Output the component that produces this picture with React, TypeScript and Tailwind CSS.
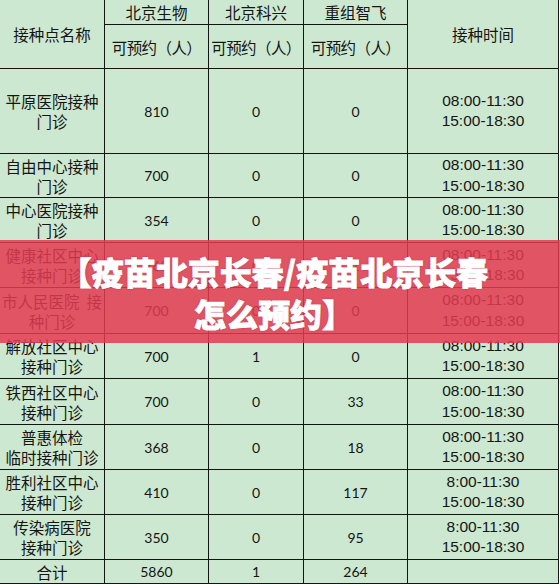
const cjk = '[font-family:"Noto_Sans_CJK_SC",sans-serif]';

type Row = {
  name: [string, string];
  a: string;
  b: string;
  c: string;
  time: [string, string] | null;
  h: string;
};

const rows: Row[] = [
  { name: ['平原医院接种', '门诊'], a: '810', b: '0', c: '0', time: ['08:00-11:30', '15:00-18:30'], h: 'h-[85px]' },
  { name: ['自由中心接种', '门诊'], a: '700', b: '0', c: '0', time: ['08:00-11:30', '15:00-18:30'], h: 'h-[44px]' },
  { name: ['中心医院接种', '门诊'], a: '354', b: '0', c: '0', time: ['08:00-11:30', '15:00-18:30'], h: 'h-[45px]' },
  { name: ['健康社区中心', '接种门诊'], a: '768', b: '0', c: '1', time: ['08:00-11:30', '15:00-18:30'], h: 'h-[45px]' },
  { name: ['市人民医院  接', '种门诊'], a: '700', b: '0', c: '0', time: ['08:00-11:30', '15:00-18:30'], h: 'h-[46px]' },
  { name: ['解放社区中心', '接种门诊'], a: '700', b: '1', c: '0', time: ['08:00-11:30', '15:00-18:30'], h: 'h-[45px]' },
  { name: ['铁西社区中心', '接种门诊'], a: '700', b: '0', c: '33', time: ['08:00-11:30', '15:00-18:30'], h: 'h-[46px]' },
  { name: ['普惠体检', '临时接种门诊'], a: '368', b: '0', c: '18', time: ['08:00-11:30', '15:00-18:30'], h: 'h-[45px]' },
  { name: ['胜利社区中心', '接种门诊'], a: '410', b: '0', c: '117', time: ['8:00-11:30', '15:00-18:30'], h: 'h-[45px]' },
  { name: ['传染病医院', '接种门诊'], a: '350', b: '0', c: '95', time: ['8:00-11:30', '15:00-18:30'], h: 'h-[45px]' },
];

const cell = 'border border-[#141414] p-0 text-center align-middle';
const num = 'text-[14px] [font-family:Lato,sans-serif]';
const time = 'text-[15.5px] leading-[20.5px] [font-family:"Liberation_Sans",Arial,sans-serif]';
const label = `text-[15.5px] leading-[20px] ${cjk}`;
const banner = `text-[32px] font-black leading-[42px] text-white [-webkit-text-stroke:0.8px_white] [text-shadow:0_0_2px_rgba(90,0,20,0.5)] ${cjk}`;

export default function App() {
  return (
    <div className="relative h-[585px] w-[560px] overflow-hidden bg-white text-[#151515]">
      <table className="table-fixed border-collapse bg-[#cde8d0] -mt-px -ml-px w-[559px]">
        <colgroup>
          <col className="w-[105px]" />
          <col className="w-[104px]" />
          <col className="w-[95px]" />
          <col className="w-[104px]" />
          <col className="w-[151px]" />
        </colgroup>
        <tbody>
          <tr className="h-[25px]">
            <td rowSpan={2} className={`${cell} ${label}`}>接种点名称</td>
            <td className={`${cell} ${label}`}>北京生物</td>
            <td className={`${cell} ${label}`}>北京科兴</td>
            <td className={`${cell} ${label}`}>重组智飞</td>
            <td rowSpan={2} className={`${cell} ${label}`}>接种时间</td>
          </tr>
          <tr className="h-[44px]">
            <td className={`${cell} ${label} whitespace-nowrap tracking-[-0.6px]`}>可预约（人）</td>
            <td className={`${cell} ${label} whitespace-nowrap tracking-[-0.6px]`}>可预约（人）</td>
            <td className={`${cell} ${label} whitespace-nowrap tracking-[-0.6px]`}>可预约（人）</td>
          </tr>
          {rows.map((r) => (
            <tr key={r.name.join('')} className={r.h}>
              <td className={`${cell} ${label} overflow-hidden`}>
                <div className="whitespace-pre">{r.name[0]}</div>
                <div className="whitespace-pre">{r.name[1]}</div>
              </td>
              <td className={`${cell} ${num}`}>{r.a}</td>
              <td className={`${cell} ${num}`}>{r.b}</td>
              <td className={`${cell} ${num}`}>{r.c}</td>
              <td className={`${cell} ${time}`}>
                {r.time && (
                  <>
                    <div>{r.time[0]}</div>
                    <div>{r.time[1]}</div>
                  </>
                )}
              </td>
            </tr>
          ))}
          <tr className="h-[24px]">
            <td className={`${cell} ${label}`}>合计</td>
            <td className={`${cell} ${num}`}>5860</td>
            <td className={`${cell} ${num}`}>1</td>
            <td className={`${cell} ${num}`}>264</td>
            <td className={cell}></td>
          </tr>
        </tbody>
      </table>

      {/* title banner over the table */}
      <div className="absolute left-0 top-[240px] flex h-[103px] w-[560px] flex-col items-center justify-center pr-[12px] bg-[rgba(227,58,81,0.85)]">
        <div className={banner}>【疫苗北京长春/疫苗北京长春</div>
        <div className={banner}>怎么预约】</div>
      </div>
    </div>
  );
}
